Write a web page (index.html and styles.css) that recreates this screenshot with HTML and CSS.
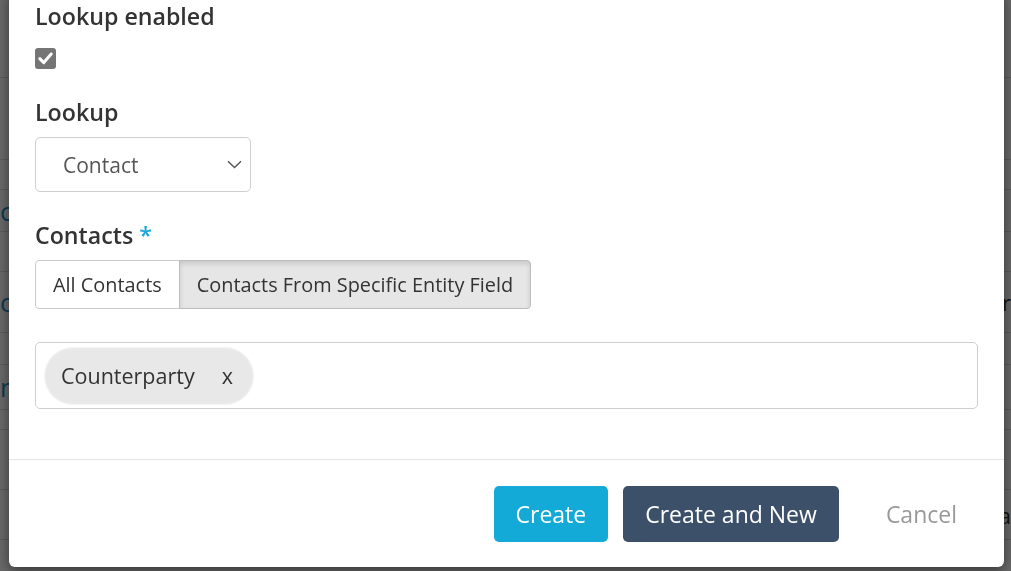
FILE: index.html
```html
<!DOCTYPE html>
<html lang="en">
<head>
<meta charset="utf-8">
<title>Create field</title>
<link rel="stylesheet" href="styles.css">
</head>
<body>
<div class="page">
  <div class="prow h78"></div>
  <div class="prow h82"></div>
  <div class="prow h30"></div>
  <div class="prow h42"><span class="pl">c</span></div>
  <div class="prow h40"></div>
  <div class="prow h61"><span class="pl">oi</span><span class="pr">r</span></div>
  <div class="prow h32"></div>
  <div class="prow h45"><span class="pl">n</span></div>
  <div class="prow h20"></div>
  <div class="prow h60"></div>
  <div class="prow h50"><span class="pr">a</span></div>
</div>
<div class="backdrop"></div>
<div class="modal">
  <div class="modal-body">
    <div class="group">
      <label class="lbl">Lookup enabled</label>
      <span class="checkbox">
        <svg width="21" height="21" viewBox="0 0 21 21"><path d="M4.8 10.6 L8.8 14.6 L16.2 6" fill="none" stroke="#fff" stroke-width="3" stroke-linecap="round" stroke-linejoin="round"/></svg>
      </span>
    </div>
    <div class="group gap">
      <label class="lbl">Lookup</label>
      <div class="select">
        <span class="select-text">Contact</span>
        <svg class="chev" width="15" height="9" viewBox="0 0 15 9"><path d="M1 1.2 L7.5 7.6 L14 1.2" fill="none" stroke="#555" stroke-width="1.4"/></svg>
      </div>
    </div>
    <div class="group gap">
      <label class="lbl">Contacts <span class="req">*</span></label>
      <div class="btn-group">
        <button class="seg">All Contacts</button>
        <button class="seg active">Contacts From Specific Entity Field</button>
      </div>
    </div>
    <div class="tag-input">
      <span class="tag"><span class="tag-text">Counterparty</span><span class="tag-x">x</span></span>
    </div>
  </div>
  <div class="modal-footer">
    <button class="btn btn-primary">Create</button>
    <button class="btn btn-dark">Create and New</button>
    <button class="btn btn-link">Cancel</button>
  </div>
</div>
</body>
</html>
```
FILE: styles.css
```css
* { box-sizing: border-box; }
html, body { margin: 0; padding: 0; }
body {
  font-family: "Open Sans", "Noto Sans", sans-serif;
  color: #333;
  width: 1011px;
  height: 571px;
  overflow: hidden;
}
.page {
  background: #fff;
  height: 571px;
  overflow: hidden;
}
.prow {
  display: flex;
  align-items: center;
  justify-content: space-between;
  border-bottom: 1px solid #dcdcdc;
}
.h78 { height: 78px; }
.h82 { height: 82px; }
.h30 { height: 30px; }
.h42 { height: 42px; }
.h40 { height: 40px; }
.h61 { height: 61px; }
.h32 { height: 32px; }
.h45 { height: 45px; }
.h20 { height: 20px; }
.h60 { height: 60px; }
.h50 { height: 50px; }
.pl { color: #1d8fc4; font-size: 26px; line-height: 1; }
.pr { color: #333; font-size: 22px; line-height: 1; margin-left: auto; }
.backdrop {
  position: fixed;
  inset: 0;
  background: rgba(0, 0, 0, 0.59);
}
.modal {
  position: fixed;
  left: 9px;
  top: -10px;
  width: 995px;
  background: #fff;
  border-radius: 6px;
  box-shadow: 0 4px 14px rgba(0, 0, 0, 0.5);
}
.modal-body {
  padding: 11px 26px 0 26px;
}
.lbl {
  display: block;
  font-size: 23.2px;
  font-weight: 600;
  line-height: 30px;
  color: #333;
}
.req { color: #1ba8d9; }
.gap { margin-top: 28px; }
.checkbox {
  display: block;
  width: 21px;
  height: 21px;
  margin-top: 17px;
  background: #757575;
  border-radius: 3px;
}
.checkbox svg { display: block; }
.select {
  margin-top: 10px;
  width: 216px;
  height: 55px;
  border: 1px solid #cfcfcf;
  border-radius: 5px;
  display: flex;
  align-items: center;
  justify-content: space-between;
  padding: 0 8px 0 27px;
}
.select-text { font-size: 21px; color: #555; }
.chev { display: block; }
.btn-group {
  margin-top: 10px;
  display: flex;
}
.seg {
  height: 49px;
  font-family: inherit;
  font-size: 19.9px;
  color: #333;
  background: #fff;
  border: 1px solid #ccc;
  padding: 0 17px;
  margin: 0;
  border-radius: 4px 0 0 4px;
}
.seg.active {
  margin-left: -1px;
  background: #e6e6e6;
  border-color: #bdbdbd;
  border-radius: 0 4px 4px 0;
  box-shadow: inset 0 3px 5px rgba(0, 0, 0, 0.125);
  padding: 0 17px;
}
.tag-input {
  margin-top: 33px;
  margin-bottom: 50px;
  height: 67px;
  border: 1px solid #cfcfcf;
  border-radius: 5px;
  display: flex;
  align-items: center;
  padding: 0 9px;
}
.tag {
  height: 56px;
  width: 208px;
  border-radius: 28px;
  background: #e8e8e8;
  border: 1px solid #ececec;
  box-shadow: 0 0 0 1px #f2f2f2;
  display: flex;
  align-items: center;
  padding: 0 19px 0 15px;
  justify-content: space-between;
  font-size: 21.5px;
  color: #333;
}
.modal-footer {
  border-top: 1px solid #e6e6e6;
  padding: 26px 25px 25px;
  display: flex;
  justify-content: flex-end;
  gap: 15px;
}
.btn {
  height: 56px;
  border: none;
  border-radius: 5px;
  font-family: inherit;
  font-size: 23px;
  padding: 0 22px;
  color: #fff;
  margin: 0;
}
.btn-primary { background: #13aad8; }
.btn-dark { background: #3c5169; }
.btn-link { background: transparent; color: #999; margin-left: 10px; }
```
